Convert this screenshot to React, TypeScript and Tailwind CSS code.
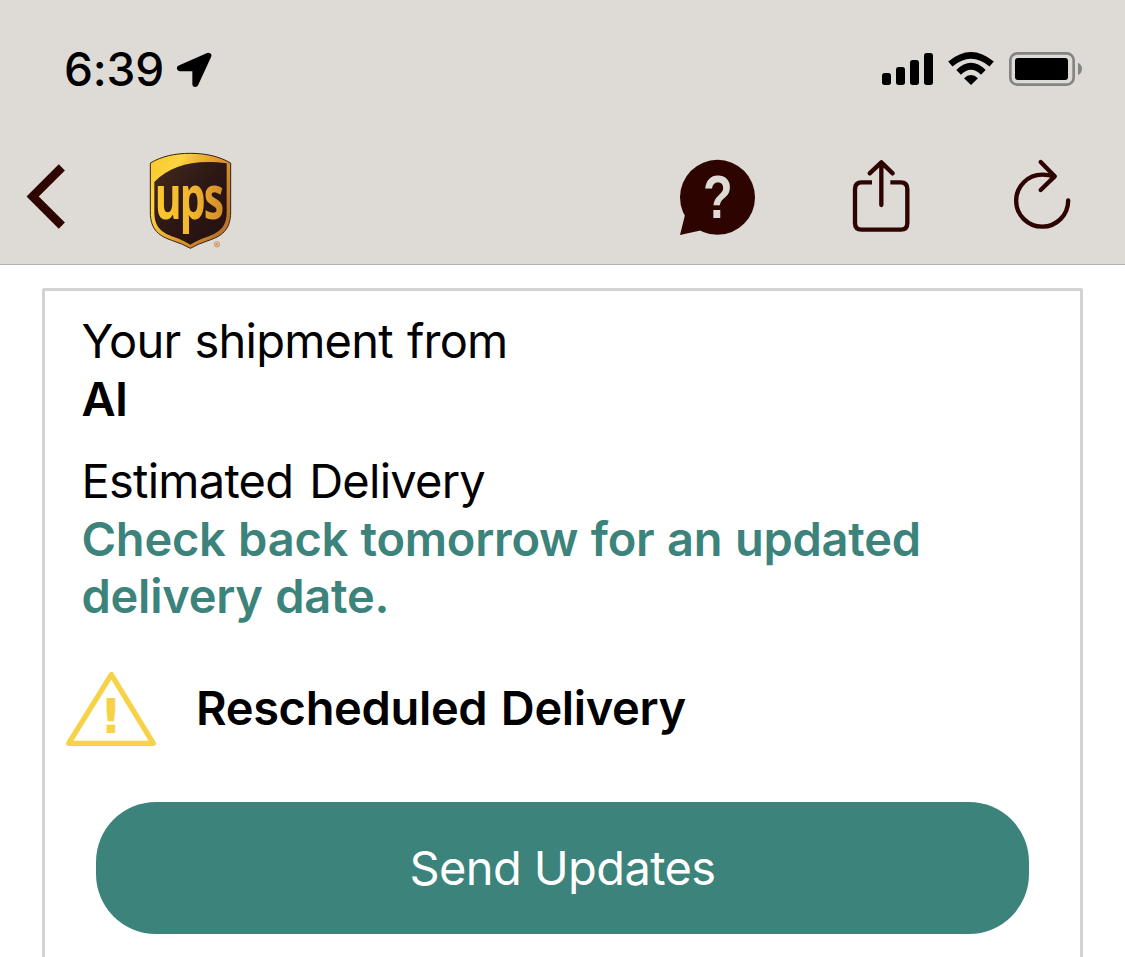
import type { ReactNode } from "react";

function LocationIcon() {
    return (
        <svg className="h-[65px] w-[60px]" viewBox="360 0 180 195" aria-hidden="true">
            <path
                d="M475 62 L390 100 H436 V147 Z"
                fill="#000"
                stroke="#000"
                strokeWidth="18"
                strokeLinejoin="round"
            />
        </svg>
    );
}

function SignalIcon() {
    return (
        <svg className="h-[60px] w-[71px]" viewBox="0 0 213 180" aria-hidden="true">
            <rect x="36" y="99" width="27" height="36" rx="8" />
            <rect x="78" y="81" width="27" height="54" rx="8" />
            <rect x="120" y="60" width="27" height="75" rx="8" />
            <rect x="162" y="39" width="27" height="96" rx="8" />
        </svg>
    );
}

function WifiIcon() {
    return (
        <svg className="h-[60px] w-[60px]" viewBox="213 0 180 180" aria-hidden="true">
            <g fill="none" stroke="#000" strokeWidth="20">
                <path d="M241 72 Q303 20 365 72" />
                <path d="M266 97 Q303 61 340 97" />
            </g>
            <path d="M282 115 Q303 95 324 115 L303 135 Z" />
        </svg>
    );
}

function BatteryIcon() {
    return (
        <svg className="h-[60px] w-[84px]" viewBox="393 0 252 180" aria-hidden="true">
            <rect x="421" y="40" width="190" height="94" rx="21" fill="none" stroke="#858482" strokeWidth="8" />
            <rect x="435" y="54" width="159" height="66" rx="9" />
            <path d="M624 68 C640 74 640 99 624 105 Z" fill="#858482" />
        </svg>
    );
}

function BackIcon() {
    return (
        <svg className="h-[110px] w-[110px]" viewBox="0 0 330 330" aria-hidden="true">
            <path d="M140.500 67 L53 154.500 L140.500 242" fill="none" stroke="#2d0400" strokeWidth="26" />
        </svg>
    );
}

function UpsLogo() {
    return (
        <svg className="h-[110px] w-[100px] overflow-visible" viewBox="0 0 300 330" role="img" aria-label="UPS">
            <defs>
                <linearGradient id="gold" x1="0" y1="0" x2="1" y2="0.600">
                    <stop offset="0" stopColor="#f9c72e" />
                    <stop offset="0.300" stopColor="#fbd440" />
                    <stop offset="0.650" stopColor="#e0992c" />
                    <stop offset="1" stopColor="#b9752a" />
                </linearGradient>
                <linearGradient id="goldText" x1="0" y1="0" x2="1" y2="0">
                    <stop offset="0" stopColor="#fcc92c" />
                    <stop offset="0.550" stopColor="#f2b62f" />
                    <stop offset="1" stopColor="#d28c2a" />
                </linearGradient>
                <linearGradient id="brown" x1="0" y1="0" x2="1" y2="1">
                    <stop offset="0" stopColor="#452b1d" />
                    <stop offset="0.500" stopColor="#2c1715" />
                    <stop offset="1" stopColor="#24100f" />
                </linearGradient>
            </defs>
            <path
                d="M31 54 C65 34 104 25 151 25 C198 25 237 34 272 54 V201 C272 257 243 274 204 287 Q171 298 151 310 Q131 298 98 287 C60 274 31 257 31 201 Z"
                fill="url(#gold)"
                stroke="#3a2118"
                strokeWidth="3"
            />
            <path
                d="M43 111 C92 60 166 42 260 55 V201 C260 247 237 263 200 276 Q170 287 151 299 Q132 287 102 276 C65 263 43 247 43 201 Z"
                fill="url(#brown)"
            />
            <text
                x="44"
                y="221"
                fill="url(#goldText)"
                textLength="203"
                lengthAdjust="spacingAndGlyphs"
                className="font-['Open_Sans'] text-[182px] font-bold tracking-[-8px]"
            >
                ups
            </text>
            <circle cx="231" cy="298" r="8" fill="none" stroke="#c98545" strokeWidth="2.500" />
            <text x="231" y="303" textAnchor="middle" fill="#c98545" className="font-['Liberation_Sans'] text-[13px] font-bold">
                R
            </text>
        </svg>
    );
}

function HelpIcon() {
    return (
        <svg className="h-[110px] w-[100px]" viewBox="0 0 300 330" aria-hidden="true">
            <circle cx="142.500" cy="157" r="112.500" fill="#2d0400" />
            <path d="M30 270 L46 206 L98 255 Z" fill="#2d0400" />
            <text
                x="99"
                y="220"
                fill="#dedad5"
                textLength="89"
                lengthAdjust="spacingAndGlyphs"
                className="font-['Liberation_Sans'] text-[183px] font-bold"
            >
                ?
            </text>
        </svg>
    );
}

function ShareIcon() {
    return (
        <svg className="h-[110px] w-[80px]" viewBox="0 0 240 330" aria-hidden="true">
            <g fill="none" stroke="#2d0400" strokeWidth="13">
                <path d="M96 112 H65 Q45 112 45 132 V234 Q45 254 65 254 H182 Q202 254 202 234 V132 Q202 112 182 112 H151" />
                <path d="M124 52 V180 M89 85 L124 52 L158 85" strokeLinecap="round" strokeLinejoin="round" />
            </g>
        </svg>
    );
}

function RefreshIcon() {
    return (
        <svg className="h-[110px] w-[90px]" viewBox="480 0 270 330" aria-hidden="true">
            <g fill="none" stroke="#2d0400" strokeWidth="13" strokeLinecap="round" strokeLinejoin="round">
                <path d="M684.500 166 A78 78 0 1 1 607 89 Q627 89 643 94" />
                <path d="M602 51 L644 94 L602 135" />
            </g>
        </svg>
    );
}

function WarningIcon() {
    return (
        <svg className="h-[100px] w-[110px]" viewBox="0 0 330 300" aria-hidden="true">
            <path
                d="M169 44 L41 250 H295 Z"
                fill="none"
                stroke="#f7d249"
                strokeWidth="16"
                strokeLinejoin="round"
            />
            <text
                x="168"
                y="219"
                fill="#f7d249"
                textAnchor="middle"
                className="font-['DejaVu_Sans'] text-[144px] font-bold"
            >
                !
            </text>
        </svg>
    );
}

function IconButton({ label, className = "", children }: { label: string; className?: string; children: ReactNode }) {
    return (
        <button type="button" aria-label={label} className={`block shrink-0 ${className}`}>
            {children}
        </button>
    );
}

export default function App() {
    return (
        <div className="flex h-[957px] w-[1125px] flex-col overflow-hidden bg-white font-[Inter,sans-serif] text-black">
            <header className="h-[265px] shrink-0 border-b border-[#b5b2ae] bg-[#dedad5]">
                {/* Status bar */}
                <div className="flex h-[145px] items-start justify-between pr-[40px] pl-[64px]">
                    <div className="flex pt-[35px]">
                        <span className="w-[106px] pt-[4px] text-[46px] leading-[60px] font-medium tracking-[-0.2px] whitespace-nowrap">
                            6:39
                        </span>
                        <LocationIcon />
                    </div>
                    <div className="flex pt-[40px]">
                        <SignalIcon />
                        <WifiIcon />
                        <BatteryIcon />
                    </div>
                </div>

                {/* Navigation */}
                <nav className="flex pr-[35px] pl-[15px]">
                    <IconButton label="Back">
                        <BackIcon />
                    </IconButton>
                    <div className="ml-[15px]">
                        <UpsLogo />
                    </div>
                    <IconButton label="Help" className="ml-auto">
                        <HelpIcon />
                    </IconButton>
                    <IconButton label="Share" className="ml-[70px]">
                        <ShareIcon />
                    </IconButton>
                    <IconButton label="Refresh" className="ml-[80px]">
                        <RefreshIcon />
                    </IconButton>
                </nav>
            </header>

            <main className="mx-[42px] mt-[23px] flex-1 rounded-t-[3px] border-[3px] border-b-0 border-[#d3d3d3] pt-[21px]">
                <div className="pl-[36.5px] text-[47px] leading-[58px] tracking-[-0.75px] whitespace-nowrap [word-spacing:1.5px]">
                    <p>Your shipment from</p>
                    <p className="font-semibold">AI</p>
                    <p className="mt-[24px] [word-spacing:3.5px]">Estimated Delivery</p>
                    <p className="leading-[57px] font-semibold tracking-[-0.26px] text-[#3b837b] [word-spacing:1px]">
                        Check back tomorrow for an updated
                        <br />
                        delivery date.
                    </p>
                </div>

                <div className="mt-[36px] flex pl-[10px]">
                    <WarningIcon />
                    <h2 className="ml-[31px] text-[47px] leading-[95px] font-semibold tracking-[-0.35px] whitespace-nowrap [word-spacing:2px]">
                        Rescheduled Delivery
                    </h2>
                </div>

                <button
                    type="button"
                    className="mt-[42px] ml-[51px] block h-[132px] w-[933px] rounded-[60px] bg-[#3b837b] text-[47px] tracking-[-0.6px] text-white"
                >
                    Send Updates
                </button>
            </main>
        </div>
    );
}
